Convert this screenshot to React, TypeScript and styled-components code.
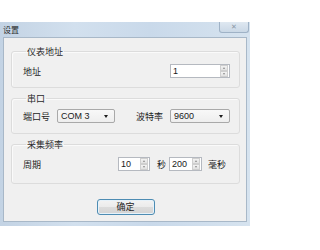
import styled, { createGlobalStyle } from 'styled-components'

const GlobalStyle = createGlobalStyle`
  html, body {
    margin: 0;
    padding: 0;
    background: #ffffff;
  }
  body {
    font-family: "Noto Sans CJK SC", "Liberation Sans", sans-serif;
    font-size: 9px;
    color: #1e1e1e;
  }
`

const Window = styled.div`
  margin-top: 22px;
  width: 250px;
  height: 204px;
  display: flex;
  flex-direction: column;
  background: linear-gradient(90deg, #c3d3e4 0%, #d2e0ee 30%, #c9d9ea 60%, #d6e3ef 100%);
  padding: 0 3px 4px 3px;
  box-sizing: border-box;
`

const TitleBar = styled.div`
  height: 15px;
  display: flex;
  align-items: flex-start;
  justify-content: space-between;
`

const Title = styled.span`
  font-size: 8px;
  line-height: 9px;
  margin-top: 3px;
  color: #2a2a2a;
`

const CloseButton = styled.div`
  width: 28px;
  height: 10px;
  margin-right: -2px;
  border: 1px solid #9fb2c6;
  border-top: none;
  border-radius: 0 0 3px 3px;
  background: linear-gradient(#dfe8f1, #cad8e6);
  display: flex;
  align-items: center;
  justify-content: center;
  font-family: "DejaVu Sans", sans-serif;
  font-size: 7px;
  color: #8a97a4;
`

const Body = styled.div`
  flex: 1;
  background: #f0f0f0;
  border: 1px solid #a8b8c8;
  padding: 8px 6px 0 7px;
  display: flex;
  flex-direction: column;
  gap: 5px;
`

const Group = styled.fieldset<{ $top: number; $bottom: number }>`
  margin: 0;
  min-inline-size: 0;
  border: 1px solid #dcdcdc;
  border-radius: 3px;
  padding: ${({ $top }) => $top}px 9px ${({ $bottom }) => $bottom}px 11px;
  box-shadow: inset 1px 1px 0 #fafafa;
`

const Legend = styled.legend`
  padding: 0 1px;
  margin-left: 3px;
  font-size: 9px;
  line-height: 11px;
  color: #2a2a2a;
`

const Row = styled.div`
  display: flex;
  align-items: center;
  height: 14px;
`

const Label = styled.span<{ $width?: number }>`
  font-size: 9px;
  line-height: 11px;
  white-space: nowrap;
  width: ${({ $width }) => ($width ? `${$width}px` : 'auto')};
`

const Unit = styled.span<{ $left: number; $right: number }>`
  font-size: 9px;
  margin-left: ${({ $left }) => $left}px;
  margin-right: ${({ $right }) => $right}px;
`

const Spacer = styled.div`
  flex: 1;
`

const SpinBox = styled.div<{ $width: number }>`
  width: ${({ $width }) => $width}px;
  height: 14px;
  box-sizing: border-box;
  background: #ffffff;
  border: 1px solid #b5b9c0;
  display: flex;
  align-items: center;
  justify-content: space-between;
  padding-left: 2px;
`

const Value = styled.span`
  font-family: "Liberation Sans", "DejaVu Sans", sans-serif;
  font-size: 9px;
  color: #1a1a1a;
`

const SpinButtons = styled.div`
  width: 8px;
  height: 12px;
  display: flex;
  flex-direction: column;
  margin-right: 1px;
`

const SpinArrow = styled.div<{ $up?: boolean }>`
  flex: 1;
  background: linear-gradient(#f3f3f3, #e2e2e2);
  border: 1px solid #cfcfcf;
  display: flex;
  align-items: center;
  justify-content: center;
  &::after {
    content: '';
    border-left: 1.5px solid transparent;
    border-right: 1.5px solid transparent;
    ${({ $up }) =>
      $up ? 'border-bottom: 2px solid #8a8a8a;' : 'border-top: 2px solid #8a8a8a;'}
  }
`

const Combo = styled.div<{ $width: number }>`
  width: ${({ $width }) => $width}px;
  height: 14px;
  box-sizing: border-box;
  border: 1px solid #a9a9a9;
  border-radius: 2px;
  background: linear-gradient(#f8f8f8, #eeeeee);
  display: flex;
  align-items: center;
  justify-content: space-between;
  padding: 0 6px 0 3px;
  &::after {
    content: '';
    border-left: 2px solid transparent;
    border-right: 2px solid transparent;
    border-top: 3px solid #1c1c1c;
  }
`

const Footer = styled.div`
  display: flex;
  justify-content: center;
  padding-top: 10px;
`

const Button = styled.button`
  width: 58px;
  height: 16px;
  padding: 0;
  border: 1px solid #4d8cb3;
  border-radius: 3px;
  background: linear-gradient(#f3f3f3 0%, #ebebeb 50%, #dcdcdc 51%, #d3d3d3 100%);
  box-shadow: inset 0 0 0 1px #e6f2fa;
  font-family: "Noto Sans CJK SC", sans-serif;
  font-size: 9px;
  line-height: 14px;
  color: #1e1e1e;
`

const Spin = ({ width, value }: { width: number; value: string }) => (
  <SpinBox $width={width}>
    <Value>{value}</Value>
    <SpinButtons>
      <SpinArrow $up />
      <SpinArrow />
    </SpinButtons>
  </SpinBox>
)

export default function App() {
  return (
    <>
      <GlobalStyle />
      <Window>
        <TitleBar>
          <Title>设置</Title>
          <CloseButton>✕</CloseButton>
        </TitleBar>
        <Body>
          <Group $top={7} $bottom={9}>
            <Legend>仪表地址</Legend>
            <Row>
              <Label>地址</Label>
              <Spacer />
              <Spin width={60} value="1" />
            </Row>
          </Group>
          <Group $top={5} $bottom={10}>
            <Legend>串口</Legend>
            <Row>
              <Label $width={34}>端口号</Label>
              <Combo $width={58}>
                <Value>COM 3</Value>
              </Combo>
              <Spacer />
              <Label>波特率</Label>
              <Unit $left={0} $right={7} />
              <Combo $width={60}>
                <Value>9600</Value>
              </Combo>
            </Row>
          </Group>
          <Group $top={7} $bottom={12}>
            <Legend>采集频率</Legend>
            <Row>
              <Label>周期</Label>
              <Spacer />
              <Spin width={32} value="10" />
              <Unit $left={7} $right={3}>秒</Unit>
              <Spin width={33} value="200" />
              <Unit $left={6} $right={4}>毫秒</Unit>
            </Row>
          </Group>
          <Footer>
            <Button>确定</Button>
          </Footer>
        </Body>
      </Window>
    </>
  )
}
